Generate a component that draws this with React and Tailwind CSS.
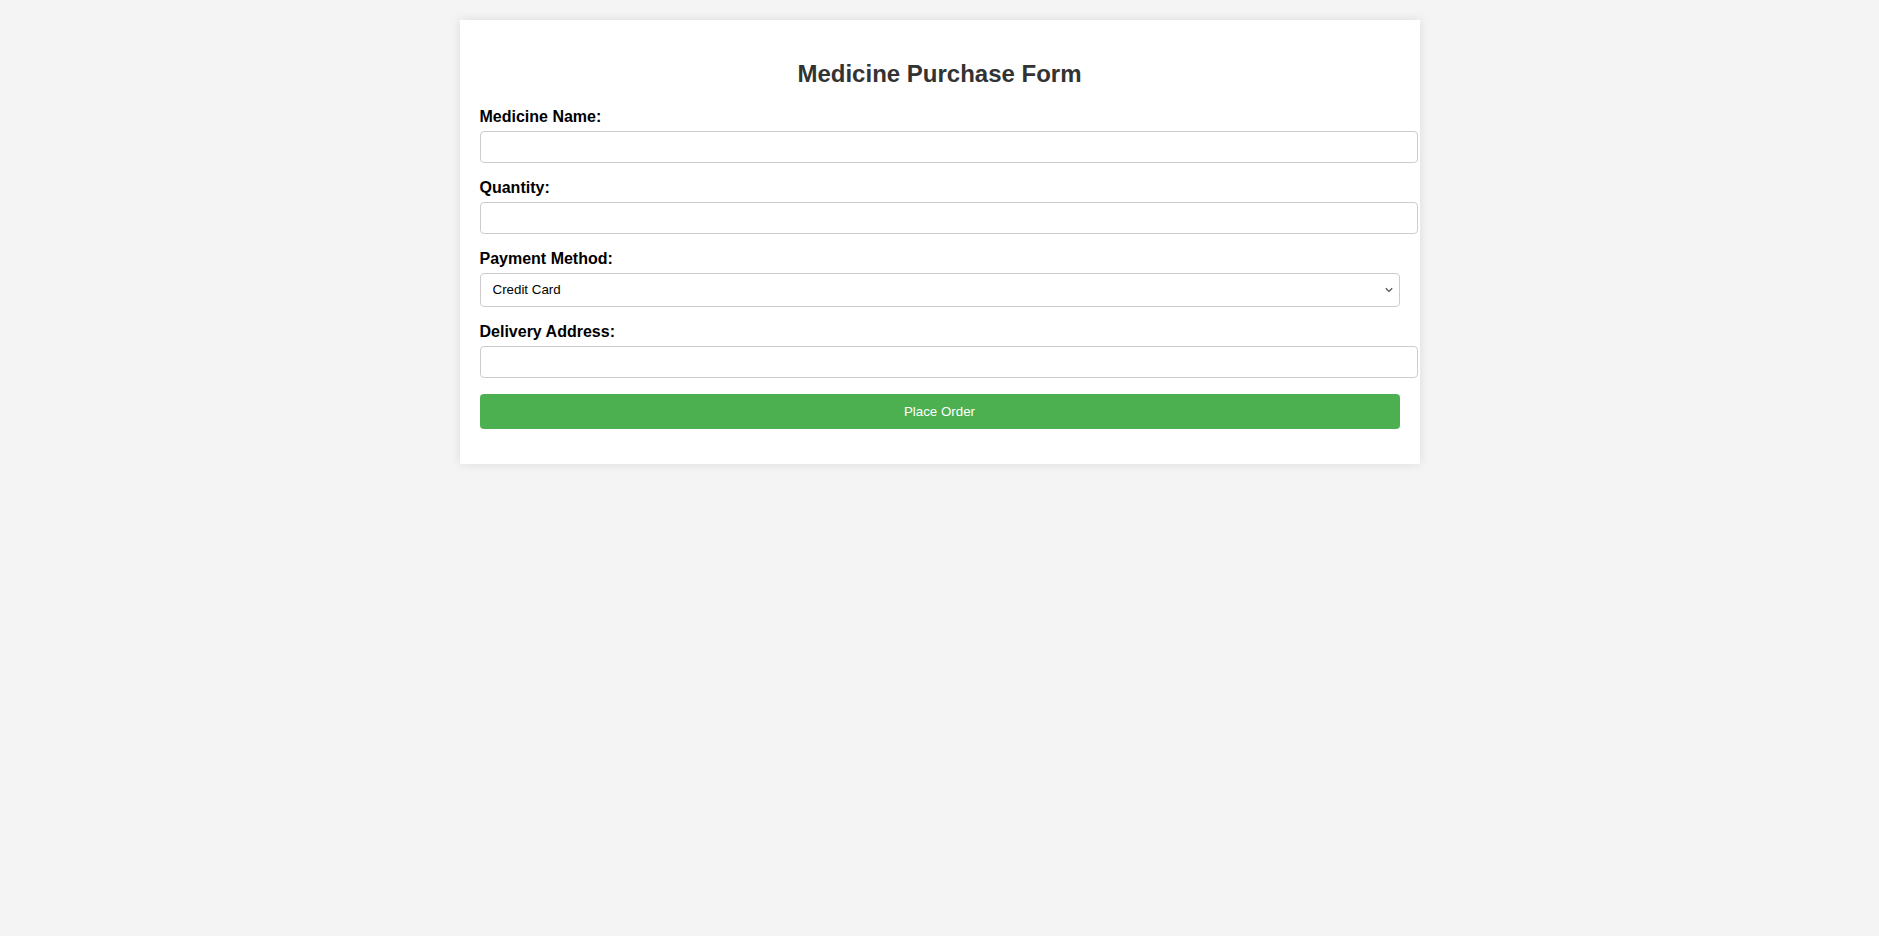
import React, { useState } from 'react';

const Field = ({ label, children }) => (
  <>
    <label className="block text-[16px] leading-[20px] font-bold text-black mb-[4px]">{label}</label>
    {children}
  </>
);

const inputClass =
  'block w-[calc(100%+18px)] h-[32px] px-[8px] border border-[#ccc] rounded-[4px] bg-white text-[13.33px] outline-none';

const App = () => {
  const [form, setForm] = useState({ name: '', quantity: '', payment: 'Credit Card', address: '' });
  const update = (key) => (e) => setForm({ ...form, [key]: e.target.value });

  return (
    <div className="min-h-screen bg-[#f4f4f4] pt-[20px] font-['Liberation_Sans',Arial,sans-serif]">
      <div className="mx-auto w-[960px] bg-white p-[20px] shadow-[0_0_10px_rgba(0,0,0,0.1)]">
        <h2 className="mt-[20px] mb-[20px] text-center text-[24px] leading-[27px] font-bold text-[#333]">
          Medicine Purchase Form
        </h2>
        <form onSubmit={(e) => e.preventDefault()}>
          <Field label="Medicine Name:">
            <input type="text" value={form.name} onChange={update('name')} className={`${inputClass} mb-[15px]`} />
          </Field>
          <Field label="Quantity:">
            <input type="number" value={form.quantity} onChange={update('quantity')} className={`${inputClass} mb-[15px]`} />
          </Field>
          <Field label="Payment Method:">
            <div className="relative mb-[15px]">
              <select
                value={form.payment}
                onChange={update('payment')}
                className="block w-full h-[34px] pl-[12px] pr-[24px] appearance-none border border-[#ccc] rounded-[4px] bg-white text-[13.33px] text-black outline-none"
              >
                <option>Credit Card</option>
                <option>Debit Card</option>
                <option>Cash on Delivery</option>
              </select>
              {/* native-looking chevron */}
              <svg
                className="pointer-events-none absolute right-[7px] top-[14px]"
                width="8"
                height="6"
                viewBox="0 0 8 6"
                fill="none"
              >
                <path d="M0.8 1.2 L4 4.4 L7.2 1.2" stroke="#555" strokeWidth="1.3" />
              </svg>
            </div>
          </Field>
          <Field label="Delivery Address:">
            <input type="text" value={form.address} onChange={update('address')} className={`${inputClass} mb-[16px]`} />
          </Field>
          <button
            type="submit"
            className="block w-full h-[35px] mb-[15px] rounded-[4px] bg-[#4CAF50] text-[13.33px] text-white cursor-pointer"
          >
            Place Order
          </button>
        </form>
      </div>
    </div>
  );
};

export default App;
